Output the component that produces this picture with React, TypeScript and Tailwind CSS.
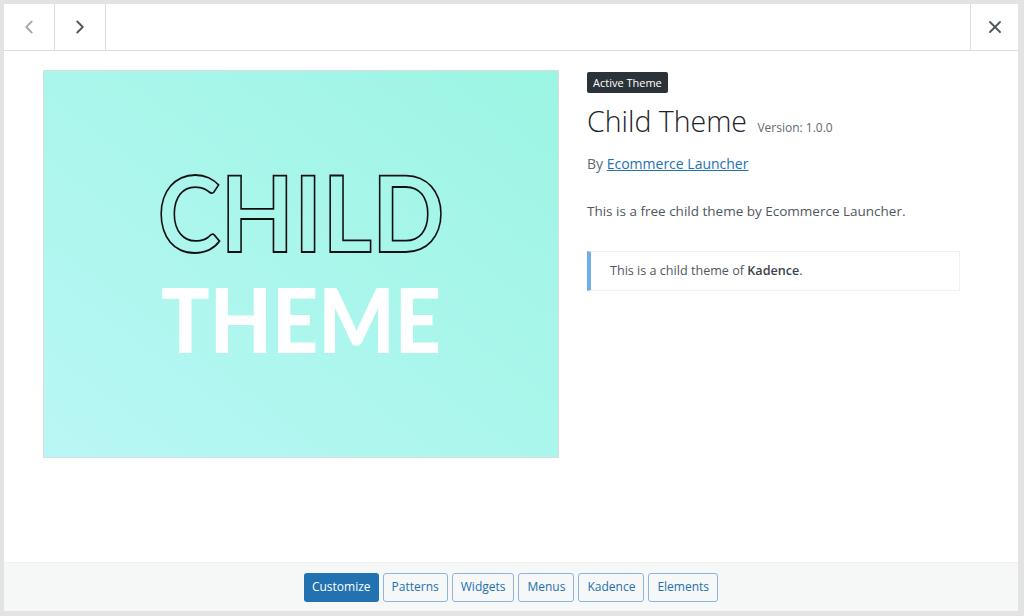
import { ChevronLeft, ChevronRight, X } from "lucide-react";

const font = { fontFamily: '"Open Sans", "Noto Sans", sans-serif' };

function ThemeShot() {
    return (
        <div className="w-[516px] h-[388px] border border-[#dcdcde] bg-gradient-to-tr from-[#b8f7f5] to-[#9cf5e3] flex items-center justify-center">
            <svg width="514" height="386" viewBox="0 0 514 386">
                <text
                    x="257"
                    y="181"
                    textAnchor="middle"
                    fontFamily="Lato, 'Noto Sans', sans-serif"
                    fontWeight="700"
                    fontSize="106"
                    textLength="287"
                    lengthAdjust="spacingAndGlyphs"
                    fill="none"
                    stroke="#111"
                    strokeWidth="1.8"
                >
                    CHILD
                </text>
                <text
                    x="257"
                    y="282"
                    textAnchor="middle"
                    fontFamily="Lato, 'Noto Sans', sans-serif"
                    fontWeight="900"
                    fontSize="90"
                    textLength="280"
                    lengthAdjust="spacingAndGlyphs"
                    fill="#fff"
                >
                    THEME
                </text>
            </svg>
        </div>
    );
}

export default function App() {
    const buttons = ["Patterns", "Widgets", "Menus", "Kadence", "Elements"];

    return (
        <div className="w-[1024px] h-[616px] bg-[#e3e3e3] p-[4px] pb-[5px] pr-[6px]" style={font}>
            <div className="w-full h-full bg-white flex flex-col">
                <div className="h-[47px] flex border-b border-[#dcdcde] shrink-0">
                    <button className="w-[51px] flex items-center justify-center border-r border-[#dcdcde] text-[#a7aaad]">
                        <ChevronLeft size={22} strokeWidth={2} />
                    </button>
                    <button className="w-[51px] flex items-center justify-center border-r border-[#dcdcde] text-[#50575e]">
                        <ChevronRight size={22} strokeWidth={2} />
                    </button>
                    <div className="flex-1" />
                    <button className="w-[48px] flex items-center justify-center border-l border-[#dcdcde] text-[#50575e]">
                        <X size={20} strokeWidth={2.2} />
                    </button>
                </div>

                <div className="flex-1 flex pl-[39px] pt-[19px] gap-[28px]">
                    <ThemeShot />
                    <div className="flex flex-col w-[373px]">
                        <span className="self-start mt-[2px] bg-[#2c3338] text-white text-[11px] leading-[21px] px-[6px] rounded-[2px]">
                            Active Theme
                        </span>
                        <h2 className="mt-[8px] text-[28.5px] font-light text-[#1d2327] leading-[40px]">
                            Child Theme{" "}
                            <span className="text-[12px] font-normal text-[#646970] ml-[3px]">Version: 1.0.0</span>
                        </h2>
                        <p className="mt-[6px] text-[14px] text-[#646970] leading-[20px]">
                            By <a className="text-[#2271b1] underline">Ecommerce Launcher</a>
                        </p>
                        <p className="mt-[27px] text-[13.5px] text-[#50575e] leading-[20px]">
                            This is a free child theme by Ecommerce Launcher.
                        </p>
                        <div className="mt-[30px] border border-[#f0f0f1] border-l-[4px] border-l-[#72aee6] h-[40px] flex items-center pl-[19px] text-[12.6px] text-[#50575e]">
                            <span>
                                This is a child theme of <strong className="font-semibold text-[#3c434a]">Kadence</strong>.
                            </span>
                        </div>
                    </div>
                </div>

                <div className="h-[49px] shrink-0 bg-[#f6f7f7] border-t border-[#f0f0f1] flex items-center justify-center gap-[4px]">
                    <button className="h-[29px] px-[8px] rounded-[3px] bg-[#2271b1] text-white text-[12px]">
                        Customize
                    </button>
                    {buttons.map(b => (
                        <button
                            key={b}
                            className="h-[29px] px-[8px] rounded-[3px] border border-[#8cb4dc] bg-[#f6f7f7] text-[#2271b1] text-[12px]"
                        >
                            {b}
                        </button>
                    ))}
                </div>
            </div>
        </div>
    );
}
